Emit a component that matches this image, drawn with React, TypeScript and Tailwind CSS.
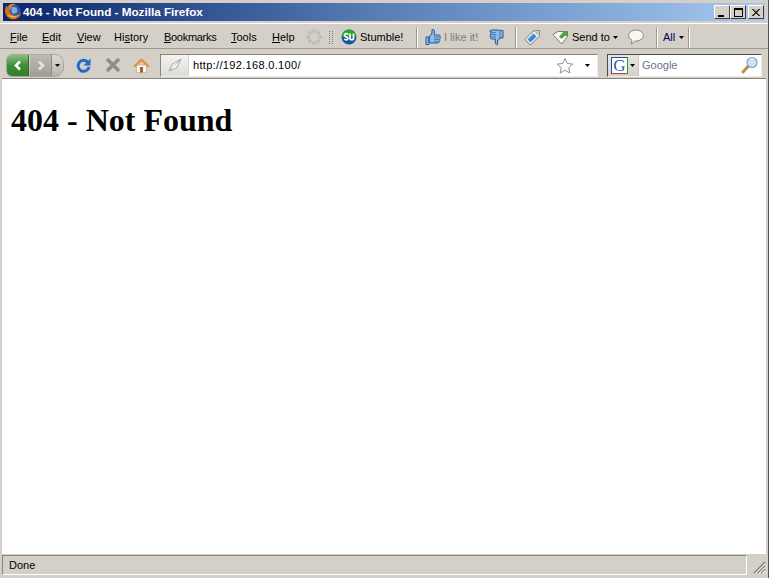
import type { ReactNode } from "react";

const ui = "font-['Liberation_Sans','Noto_Sans',sans-serif]";

function MenuItem({ pre, key_, post, className }: { pre?: string; key_: string; post: string; className: string }) {
  return (
    <span className={`shrink-0 text-[11px] text-black ${className}`}>
      {pre}
      <span className="underline">{key_}</span>
      {post}
    </span>
  );
}

function Sep({ className }: { className: string }) {
  return <div className={`w-[2px] h-[21px] shrink-0 border-l border-[#9d9a92] border-r-[1px] border-r-white ${className}`} />;
}

function Caret({ className, color = "#000" }: { className: string; color?: string }) {
  return (
    <svg width="5" height="3" viewBox="0 0 5 3" className={`shrink-0 ${className}`}>
      <path d="M0 0h5L2.500 3z" fill={color} />
    </svg>
  );
}

function WinButton({ children }: { children: ReactNode }) {
  return (
    <div className="w-[16px] h-[14px] bg-[#d4d0c8] border border-t-white border-l-white border-r-[#404040] border-b-[#404040] flex items-center justify-center">
      {children}
    </div>
  );
}

function FoxLogo() {
  return (
    <svg width="18" height="18" viewBox="0 0 18 18">
      <circle cx="9" cy="8.500" r="7.500" fill="#2f5aa6" />
      <path d="M7.500 4.500c2-1 4.500-.5 5.500 1.500.6 1.400.2 3-1 4-1.500 1-3.500.8-4.500-.5z" fill="#86a8dc" />
      <path d="M2.500 2.500C.3 6 .5 11 4 14.500c3 2.500 8 2.500 11-.5 1.200-1.200 1.800-2.800 2-4.500-.8 1.500-2.500 2.800-4.500 3-3.500.4-6.500-1.500-7.500-5C4.500 6 3.500 4 2.500 2.500z" fill="#dc6c18" />
      <path d="M3 11c1.500 2.500 4 4 7 3.500 2-.3 3.500-1.200 4.500-2.500-2 1-5 1.500-7.500.5C5 12 4 11.500 3 11z" fill="#f4b73a" />
      <path d="M4.500 3C6 1 9 .3 11.500 1.200 9.500 1.500 8 2.500 7 4.500 6.500 6 6 7 5 7.500 4.500 6 4.300 4.500 4.500 3z" fill="#e8891f" />
    </svg>
  );
}

function Spinner() {
  const dots = [[8, 2], [12.200, 3.800], [14, 8], [12.200, 12.200], [8, 14], [3.800, 12.200], [2, 8], [3.800, 3.800]];
  return (
    <svg width="16" height="16" viewBox="0 0 16 16" className="shrink-0">
      {dots.map(([x, y]) => (
        <circle key={`${x}-${y}`} cx={x} cy={y} r="1.900" fill="#bfbcb5" />
      ))}
    </svg>
  );
}

function Grip() {
  return (
    <svg width="5" height="13" viewBox="0 0 5 13" className="shrink-0">
      {[0, 2, 4, 6, 8, 10, 12].flatMap((y) => [
        <rect key={`a${y}`} x="0" y={y} width="1" height="1" fill="#7d7a74" />,
        <rect key={`b${y}`} x="3" y={y} width="1" height="1" fill="#7d7a74" />,
      ])}
    </svg>
  );
}

function StumbleLogo() {
  return (
    <svg width="16" height="16" viewBox="0 0 16 16" className="shrink-0">
      <circle cx="8" cy="8" r="7.500" fill="#14589f" />
      <path d="M.6 8a7.400 7.400 0 0 1 14.800 0z" fill="#2da52d" />
      <path d="M7 5.500C6 4 3.500 4.500 3.500 6.200c0 2 3.500 1.500 3.500 3.300 0 1.700-3 1.700-3.500.2M9 4.500v4.700c0 2 3.500 2 3.500 0V4.500" stroke="#fff" strokeWidth="1.700" fill="none" />
    </svg>
  );
}

function ThumbUp() {
  return (
    <svg width="16" height="18" viewBox="0 0 16 18" className="shrink-0">
      <path d="M1 9h3v7.500H1zM4 9.500 7 5V1.500c2-.5 2.500 1 2.500 2.500L9 7h5c1.200 0 1.500 1.400.8 2 .8.600.6 1.800-.2 2.200.5.700.3 1.700-.5 2 .3.900-.2 1.800-1.100 1.800H7c-1.500 0-3-.5-3-1z" fill="#8dbcec" stroke="#27598f" strokeWidth="1" strokeLinejoin="round" />
      <path d="M9 9.200h5M9 11.400h5M9 13.400h4" stroke="#27598f" strokeWidth="0.700" />
    </svg>
  );
}

function ThumbDown() {
  return (
    <svg width="15" height="17" viewBox="0 0 15 17" className="shrink-0">
      <path d="M1 2.500c0-1 .8-1.500 1.500-1.500H9c1 0 1.500.5 2 .5h3v7.500h-3L8.500 12v3.500c-1.500.5-2.500-1-2.300-2.500L6.500 10H2.500c-1 0-1.500-1.300-.8-2-.8-.6-.6-1.800.1-2.200-.5-.7-.4-2 .3-3.300z" fill="#8dbcec" stroke="#27598f" strokeWidth="1" strokeLinejoin="round" />
      <path d="M2 3.700h5M2 5.800h5M2 8h5M11 1.500v7.500" stroke="#27598f" strokeWidth="0.700" />
    </svg>
  );
}

function TagIcon() {
  return (
    <svg width="17" height="17" viewBox="0 0 17 17" className="shrink-0">
      <path d="M1 10.500 9.500 2 15.500 1.500 15 7.500 6.500 16z" fill="#f3f3ef" stroke="#77776f" strokeWidth="1" strokeLinejoin="round" />
      <path d="M3.500 10.500 9.500 4.500 12.500 7.500 6.500 13.500z" fill="#3f87dd" />
      <circle cx="12.800" cy="4.200" r="1" fill="#fff" stroke="#777" strokeWidth="0.600" />
    </svg>
  );
}

function SendIcon() {
  return (
    <svg width="17" height="15" viewBox="0 0 17 15" className="shrink-0">
      <path d="M1 4.500 6 1.500h9.500v5L9.500 14z" fill="#fbfbf8" stroke="#77776f" strokeWidth="1" strokeLinejoin="round" />
      <path d="M7 6.500 11 2.500 9.500 1.500H15v5.200L13.500 5.500 9.500 9z" fill="#4aa640" />
    </svg>
  );
}

function Bubble() {
  return (
    <svg width="16" height="16" viewBox="0 0 16 16" className="shrink-0">
      <path d="M8 1C4 1 .7 3.300.7 6.500c0 2 1.300 3.600 3.300 4.600L3.500 15 7.500 12c4.500 0 7.800-2.300 7.800-5.500S12 1 8 1z" fill="#f8f8f5" stroke="#85857d" strokeWidth="1" strokeLinejoin="round" />
    </svg>
  );
}

function BackForward() {
  return (
    <div className="w-[58px] h-[23px] shrink-0 rounded-l-[6px] rounded-r-[9px] border border-[#aaa79f] bg-gradient-to-b from-[#dedbd4] to-[#b8b5ad] flex items-center">
      <div className="w-[22px] h-[21px] rounded-l-[5px] bg-gradient-to-b from-[#86c07c] via-[#3f8f38] to-[#2f7f2b] border-r border-[#2e6a2a] flex items-center justify-center">
        <svg width="10" height="11" viewBox="0 0 10 11">
          <path d="M7 1.500 3 5.500l4 4" stroke="#fff" strokeWidth="2.600" fill="none" />
        </svg>
      </div>
      <div className="ml-[1px] w-[22px] h-[21px] bg-gradient-to-b from-[#bdbab2] to-[#a09d96] border-r border-[#8d8a83] flex items-center justify-center">
        <svg width="10" height="11" viewBox="0 0 10 11">
          <path d="M3 1.500 7 5.500l-4 4" stroke="#e4e2dc" strokeWidth="2.600" fill="none" />
        </svg>
      </div>
      <Caret className="ml-[3px]" />
    </div>
  );
}

function Reload() {
  return (
    <svg width="17" height="17" viewBox="0 0 17 17" className="shrink-0">
      <path d="M13 5.500A5.500 5.500 0 1 0 14 10" stroke="#1c6cc8" strokeWidth="3" fill="none" />
      <path d="M15.500 1.500v7h-7z" fill="#1c6cc8" />
    </svg>
  );
}

function Stop() {
  return (
    <svg width="16" height="16" viewBox="0 0 16 16" className="shrink-0">
      <path d="M2 2 14 14M14 2 2 14" stroke="#8f8d87" strokeWidth="3.400" />
    </svg>
  );
}

function Home() {
  return (
    <svg width="17" height="17" viewBox="0 0 17 17" className="shrink-0">
      <path d="M3.500 8v7.500h10V8z" fill="#f7f5ee" stroke="#b9b6ac" strokeWidth="0.800" />
      <path d="M7 10h3v5.500H7z" fill="#a8602a" />
      <path d="M.8 9 8.500 1.500 16.200 9l-1.200 1-6.500-6-6.500 6z" fill="#ef9b2d" stroke="#c9731a" strokeWidth="0.500" />
    </svg>
  );
}

function Star() {
  return (
    <svg width="18" height="17" viewBox="0 0 18 17" className="shrink-0">
      <path d="M9 1.500 11.300 6.500 16.800 7.100 12.700 10.800 13.900 16 9 13.300 4.100 16 5.300 10.800 1.200 7.100 6.700 6.500z" fill="#fff" stroke="#8f8f8f" strokeWidth="1" strokeLinejoin="round" />
    </svg>
  );
}

function Magnifier() {
  return (
    <svg width="18" height="18" viewBox="0 0 18 18" className="shrink-0">
      <path d="M2 16 7 10.500" stroke="#c98a3a" strokeWidth="3" strokeLinecap="round" />
      <circle cx="11" cy="6.500" r="5" fill="#cfe6f7" stroke="#7ba6c9" strokeWidth="1.200" />
    </svg>
  );
}

export default function App() {
  return (
    <div className={`w-[769px] h-[578px] overflow-hidden bg-[#d4d0c8] border-r border-r-[#555] flex flex-col ${ui}`}>
      {/* Title bar */}
      <div className="mt-[3px] mx-[3px] h-[18px] shrink-0 bg-gradient-to-r from-[#0a246a] via-[#5a7fb8] to-[#a6caf0] flex items-center">
        <div className="ml-[1px]"><FoxLogo /></div>
        <span className="ml-[1px] text-[11.700px] font-bold text-white whitespace-nowrap">404 - Not Found - Mozilla Firefox</span>
        <div className="ml-auto mr-[1px] flex">
          <WinButton>
            <div className="w-[6px] h-[2px] bg-black mt-[7px] mr-[2px]" />
          </WinButton>
          <WinButton>
            <div className="w-[9px] h-[9px] border border-black border-t-2" />
          </WinButton>
          <div className="ml-[2px]">
            <WinButton>
              <svg width="8" height="7" viewBox="0 0 8 7">
                <path d="M0 0 7 7M1.500 0 8 7M7 0 0 7M8 0 1 7" stroke="#000" strokeWidth="0.800" />
              </svg>
            </WinButton>
          </div>
        </div>
      </div>

      {/* Menu bar */}
      <div className="mt-[2px] h-[25px] pt-[2px] shrink-0 border-t border-[#fff] flex items-center whitespace-nowrap">
        <MenuItem key_="F" post="ile" className="ml-[10px] w-[32px]" />
        <MenuItem key_="E" post="dit" className="w-[35px]" />
        <MenuItem key_="V" post="iew" className="w-[37px]" />
        <MenuItem pre="Hi" key_="s" post="tory" className="w-[50px]" />
        <MenuItem key_="B" post="ookmarks" className="w-[67px] tracking-[-0.300px]" />
        <MenuItem key_="T" post="ools" className="w-[41px]" />
        <MenuItem key_="H" post="elp" className="w-[34px]" />
        <Spinner />
        <div className="ml-[7px]"><Grip /></div>
        <div className="ml-[7px]"><StumbleLogo /></div>
        <span className="ml-[3px] w-[56px] shrink-0 text-[11px] text-black">Stumble!</span>
        <Sep className="" />
        <div className="ml-[7px]"><ThumbUp /></div>
        <span className="ml-[3px] w-[45px] shrink-0 text-[11px] text-[#7d7b76]">I like it!</span>
        <ThumbDown />
        <Sep className="ml-[11px]" />
        <div className="ml-[7px]"><TagIcon /></div>
        <div className="ml-[11px]"><SendIcon /></div>
        <span className="ml-[3px] w-[41px] shrink-0 text-[11px] text-black">Send to</span>
        <Caret className="" />
        <div className="ml-[10px]"><Bubble /></div>
        <Sep className="ml-[12px]" />
        <span className="ml-[5px] w-[16px] shrink-0 text-[11px] text-[#000060]">All</span>
        <Caret className="" />
        <Sep className="ml-[4px]" />
      </div>

      {/* Navigation toolbar */}
      <div className="h-[30px] pt-[3px] shrink-0 border-t border-[#9d9a92] flex items-center">
        <div className="ml-[6px]"><BackForward /></div>
        <div className="ml-[11px]"><Reload /></div>
        <div className="ml-[13px]"><Stop /></div>
        <div className="ml-[12px]"><Home /></div>
        <div className="ml-[10px] w-[438px] h-[23px] shrink-0 border border-t-[#86847c] border-l-[#86847c] border-r-[#efede8] border-b-[#efede8] bg-white flex items-center">
          <div className="w-[28px] h-full bg-gradient-to-b from-[#f4f3ef] to-[#dedcd6] border-r border-[#d8d6d0] flex items-center justify-center">
            <svg width="16" height="16" viewBox="0 0 16 16">
              <path d="M2 14 5 7.500 14 2 9.500 11z" fill="#fafafa" stroke="#9aa4b3" strokeWidth="1" />
              <path d="M2 14 14 2" stroke="#aeb6c2" strokeWidth="0.800" />
            </svg>
          </div>
          <span className="ml-[4px] text-[11px] tracking-[0.330px] text-black">http://192.168.0.100/</span>
          <div className="ml-auto mr-[1px]"><Star /></div>
          <Caret className="ml-[10px] mr-[7px]" />
        </div>
        <div className="ml-[9px] w-[155px] h-[23px] shrink-0 border border-t-[#4a4a46] border-l-[#4a4a46] border-r-[#efede8] border-b-[#efede8] bg-white flex items-center">
          <div className="w-[31px] h-full bg-gradient-to-b from-[#e8e6e0] to-[#d4d2cc] border-r border-[#c9c7c1] flex items-center shrink-0">
            <div className="ml-[3px] w-[17px] h-[17px] border border-t-[#1c4fa4] border-l-[#1c4fa4] border-r-[#2f9b33] border-b-[#c8382a] bg-white flex items-center justify-center text-[17px] leading-none text-[#1c5fc4] font-['Liberation_Serif',serif]">
              G
            </div>
            <Caret className="ml-[2px]" />
          </div>
          <span className="ml-[3px] text-[11px] text-[#6f6f8f]">Google</span>
          <div className="ml-auto mr-[2px]"><Magnifier /></div>
        </div>
      </div>

      {/* Page */}
      <div className="mx-[2px] flex-1 min-h-0 bg-white border-t border-[#86847c] pl-[9px] font-['Liberation_Serif',serif]">
        <h1 className="mt-[23px] text-[32px] leading-[37px] font-bold text-black">404 - Not Found</h1>
      </div>

      {/* Status bar */}
      <div className="h-[21px] shrink-0 mx-[2px] mb-[3px] flex">
        <div className="mt-[1px] w-[745px] pt-[1px] border border-t-[#86847c] border-l-[#86847c] border-r-white border-b-white flex items-center pl-[6px] text-[11px] text-black">
          Done
        </div>
        <div className="ml-auto self-end mb-[1px]">
          <svg width="13" height="13" viewBox="0 0 13 13">
            <path d="M12 1 1 12M12 4.500 4.500 12M12 8 8 12" stroke="#86847c" strokeWidth="1.500" />
            <path d="M12 3 3 12M12 6.500 6.500 12M12 10 10 12" stroke="#fff" strokeWidth="1" />
          </svg>
        </div>
      </div>
    </div>
  );
}
